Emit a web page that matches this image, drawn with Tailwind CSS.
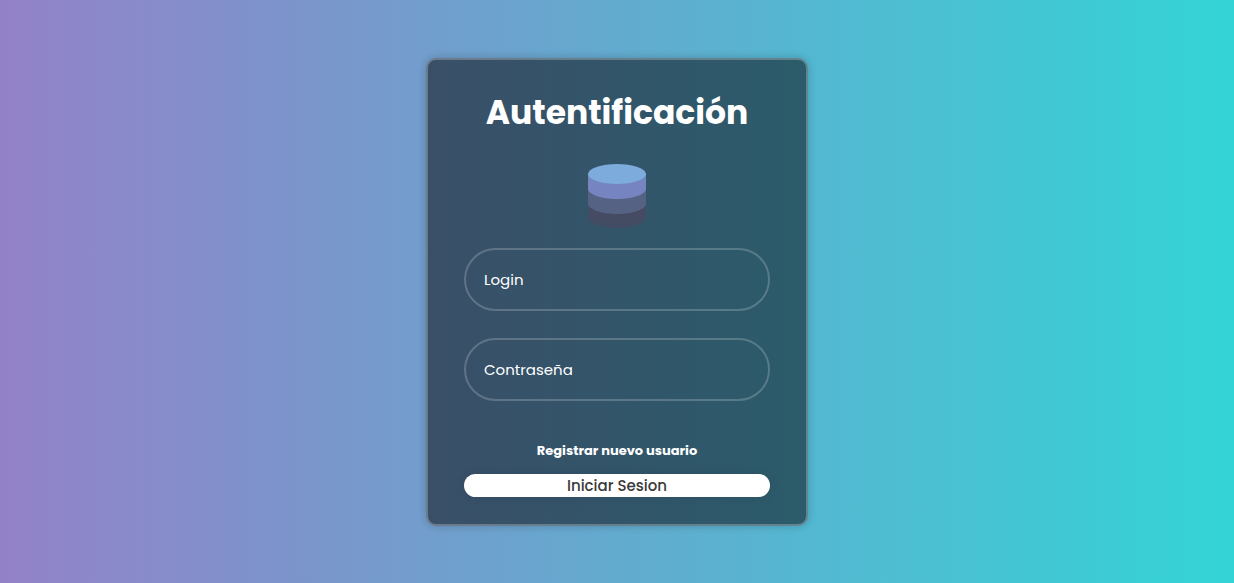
<!DOCTYPE html>
<html lang="es">
<head>
<meta charset="utf-8">
<meta name="viewport" content="width=device-width, initial-scale=1">
<title>Autentificación</title>
<script src="https://cdn.jsdelivr.net/npm/@tailwindcss/browser@4"></script>
</head>
<body class="flex min-h-screen items-center justify-center bg-linear-to-r/srgb from-[#9381c8] to-[#33d4d6] pt-px font-['Poppins','Inter',sans-serif] text-white">
<main class="w-full max-w-[382px] rounded-[10px] border-2 border-white/25 bg-[#080a10]/53 px-9 pt-7 pb-[27px] shadow-[0_0_9px_rgba(0,0,0,0.2)]">
  <form class="flex flex-col">
    <h1 class="text-center text-[33px] leading-[50px] font-bold">Autentificación</h1>
    <svg class="mx-auto mt-[26px] h-16 w-[58px]" viewBox="0 0 58 64" aria-hidden="true">
      <defs>
        <linearGradient id="base" x1="0" y1="0" x2="0" y2="1">
          <stop offset="0.5" stop-color="#444b63"/>
          <stop offset="1" stop-color="#474a62" stop-opacity="0.7"/>
        </linearGradient>
      </defs>
      <path d="M0 39v15c0 5 13 10 29 10s29-5 29-10V39z" fill="url(#base)"/>
      <path d="M0 25v15c0 5 13 10 29 10s29-5 29-10V25z" fill="#566284"/>
      <path d="M0 10v15c0 5 13 10 29 10s29-5 29-10V10z" fill="#7684c2"/>
      <ellipse cx="29" cy="10" rx="29" ry="10" fill="#7dabdb"/>
    </svg>
    <input type="text" aria-label="Login" placeholder="Login" class="mt-5 h-[63px] w-full rounded-full border-2 border-white/20 bg-transparent px-[18px] text-[15px] text-white outline-none placeholder:text-white">
    <input type="password" aria-label="Contraseña" placeholder="Contraseña" class="mt-[27px] h-[63px] w-full rounded-full border-2 border-white/20 bg-transparent px-[18px] text-[15px] text-white outline-none placeholder:text-white">
    <a href="#" class="mx-auto mt-10 text-[13px] leading-5 font-bold">Registrar nuevo usuario</a>
    <button type="submit" class="mt-[13px] h-[23px] w-full rounded-full bg-white text-[15px] leading-5 font-medium text-[#3a3a3a] shadow-[0_0_10px_rgba(0,0,0,0.1)]">Iniciar Sesion</button>
  </form>
</main>
</body>
</html>
